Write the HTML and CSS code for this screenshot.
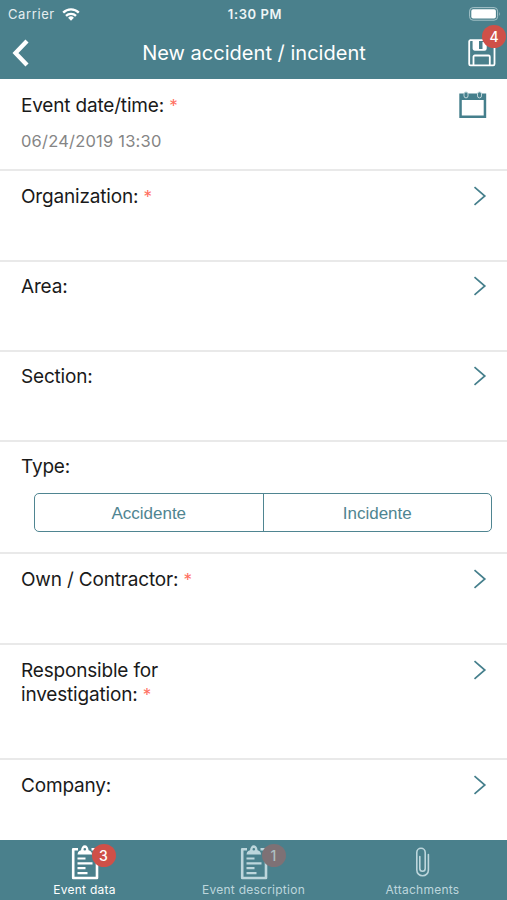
FILE: index.html
```html
<!DOCTYPE html>
<html lang="en">
<head>
<meta charset="utf-8">
<title>New accident / incident</title>
<link rel="stylesheet" href="styles.css">
</head>
<body>
<svg class="defs" width="0" height="0" aria-hidden="true">
  <symbol id="chevron" viewBox="0 0 14 20"><path d="M1.500 1.200 11.800 10 1.500 18.800" fill="none" stroke="currentColor" stroke-width="1.700"/></symbol>
  <symbol id="clipboard" viewBox="0 0 28 36">
    <path d="M7 4.300H2.200V33H26V4.300H20.500" fill="none" stroke="currentColor" stroke-width="2.600" stroke-linejoin="round"/>
    <path fill-rule="evenodd" fill="currentColor" d="M6.500 9.500C7 6.500 8 5.800 10 5.300C10.300 2.200 11.700.2 13.800.2S17.300 2.200 17.600 5.300C19.600 5.800 20.600 6.500 21.100 9.500ZM13.800 3A1.300 1.300 0 1 0 13.800 5.600A1.300 1.300 0 1 0 13.800 3"/>
    <path d="M6.500 13.500H14.500M6.500 18.300H21.500M6.500 23.200H14.500M6.500 28.200H16.500" stroke="currentColor" stroke-width="2.200"/>
  </symbol>
</svg>
<div class="app">
  <header class="header">
    <div class="status">
      <div class="carrier"><span>Carrier</span>
        <svg width="18" height="13" viewBox="0 0 18 13"><g fill="none" stroke="#fff" stroke-width="2.300"><path d="M1.200 4.600a11 11 0 0 1 15.600 0"/><path d="M4 7.900a7 7 0 0 1 10 0"/></g><path d="M9 12.700 6.100 9.700a4.200 4.200 0 0 1 5.800 0Z" fill="#fff"/></svg>
      </div>
      <div class="time">1:30 PM</div>
      <svg class="battery" width="33" height="14" viewBox="0 0 33 14"><rect x=".6" y=".6" width="28" height="12.600" rx="3.500" fill="none" stroke="#a6c3c9"/><rect x="2.300" y="2.300" width="24.600" height="9.200" rx="1.800" fill="#fff"/><path d="M30.300 4.800q1.600 2.100 0 4.200Z" fill="#a6c3c9"/></svg>
    </div>
    <div class="navbar">
      <svg class="back" width="17" height="28" viewBox="0 0 17 28"><path d="M15 2 3.500 14 15 26" fill="none" stroke="#fff" stroke-width="4.300"/></svg>
      <h1>New accident / incident</h1>
      <div class="save">
        <svg width="28" height="28" viewBox="0 0 28 28"><path d="M2 1.200H22L26.500 5.500V25A1.300 1.300 0 0 1 25.200 26.300H2.500A1.300 1.300 0 0 1 1.200 25V2.500A1.300 1.300 0 0 1 2.500 1.200M5.500 1.500V9.500A1.300 1.300 0 0 0 6.800 10.800H16.500A1.300 1.300 0 0 0 17.800 9.500V1.500M5.500 26V17.800A1.300 1.300 0 0 1 6.800 16.500H20.500A1.300 1.300 0 0 1 21.800 17.800V26" fill="none" stroke="#fff" stroke-width="1.800"/><path d="M5.500 1.500H11V10H5.500ZM14.500 3H17.500V10H14.500Z" fill="#fff"/></svg>
        <span class="badge">4</span>
      </div>
    </div>
  </header>
  <main class="form">
    <section class="row date">
      <div><div class="label">Event date/time: <i>*</i></div><div class="value">06/24/2019 13:30</div></div>
      <svg class="calendar" width="28" height="28" viewBox="0 0 28 28"><path fill="#457f8c" fill-rule="evenodd" d="M.3 2.500H27.200V27H.3ZM2.800 9V24.500H24.700V9Z"/><g fill="#457f8c" stroke="#c4d8dc"><rect x="5" y=".9" width="4" height="6" rx="2"/><rect x="18.500" y=".9" width="4" height="6" rx="2"/></g></svg>
    </section>
    <section class="row org"><div class="label">Organization: <i>*</i></div><svg class="chev"><use href="#chevron"/></svg></section>
    <section class="row area"><div class="label">Area:</div><svg class="chev"><use href="#chevron"/></svg></section>
    <section class="row area"><div class="label">Section:</div><svg class="chev"><use href="#chevron"/></svg></section>
    <section class="row type"><div class="label">Type:</div>
      <div class="segments"><button>Accidente</button><button>Incidente</button></div>
    </section>
    <section class="row own"><div class="label">Own / Contractor: <i>*</i></div><svg class="chev"><use href="#chevron"/></svg></section>
    <section class="row resp"><div class="label">Responsible for<br>investigation: <i>*</i></div><svg class="chev"><use href="#chevron"/></svg></section>
    <section class="row company"><div class="label">Company:</div><svg class="chev"><use href="#chevron"/></svg></section>
  </main>
  <nav class="tabs">
    <div class="tab active"><div class="icon"><svg width="28" height="36"><use href="#clipboard"/></svg><span class="badge">3</span></div><span class="name">Event data</span></div>
    <div class="tab"><div class="icon"><svg width="28" height="36"><use href="#clipboard"/></svg><span class="badge faint">1</span></div><span class="name">Event description</span></div>
    <div class="tab"><div class="icon"><svg width="28" height="36" viewBox="0 0 28 36"><path d="M10.800 11.500V23.500a2.700 2.700 0 0 0 5.400 0V7.500a4.200 4.200 0 0 0-8.400 0V25a5.800 5.800 0 0 0 11.600 0V9.500" fill="none" stroke="currentColor" stroke-width="1.600" stroke-linecap="round"/></svg></div><span class="name">Attachments</span></div>
  </nav>
</div>
</body>
</html>
```
FILE: styles.css
```css
* { box-sizing: border-box; }
body { margin: 0; font-family: Inter, "Liberation Sans", sans-serif; background: #fff; color: #1a1a1a; }
svg { display: block; flex: none; }
.defs { position: absolute; }
.app { width: 507px; height: 900px; display: flex; flex-direction: column; overflow: hidden; }
.header { height: 79px; flex: none; background: #4a808c; color: #fff; }
.status { height: 27px; display: grid; grid-template-columns: 1fr auto 1fr; align-items: center; padding: 1px 5px 0 8px; font-size: 13px; }
.carrier { display: flex; align-items: center; gap: 7px; color: #e5eef0; letter-spacing: .6px; }
.time { font-weight: 600; letter-spacing: .6px; color: #eef5f6; }
.battery { justify-self: end; }
.navbar { height: 51px; display: grid; grid-template-columns: 40px 1fr 40px; align-items: center; padding: 0 11px 0 12px; }
h1 { margin: 0; font-size: 20px; font-weight: 400; text-align: center; letter-spacing: .02px; padding-top: 1px; }
.save { position: relative; width: 28px; justify-self: end; }
.badge { position: absolute; left: 14px; top: -14px; width: 24px; height: 23px; border-radius: 50%; background: #cf5048; color: #fff; font-size: 14px; font-weight: 500; line-height: 23px; text-align: center; }
.form { flex: 1; min-height: 0; }
.row { display: flex; justify-content: space-between; align-items: flex-start; border-bottom: 2px solid #e9e9e9; padding: 13px 20px 0 21px; height: 90px; }
.label { font-size: 19px; line-height: 24px; letter-spacing: -.18px; }
.label i { font-style: normal; font-size: 17px; color: #ff6f61; }
.chev { width: 14px; height: 20px; margin-top: 1px; color: #457f8c; }
.date { height: 92px; padding-top: 15px; }
.value { font-size: 16.500px; line-height: 20px; margin-top: 13px; letter-spacing: .2px; color: #858585; }
.calendar { margin-top: -3px; }
.org { height: 91px; padding-top: 14px; }
.type { height: 112px; display: block; padding-right: 15px; }
.segments { display: flex; height: 39px; margin: 14px 0 0 13px; border: 1px solid #4f8591; border-radius: 5px; }
.segments button { flex: 1; border: 0; background: none; padding: 2px 0 0; font-family: "Liberation Sans", sans-serif; font-size: 17px; color: #4f8591; }
.segments button + button { border-left: 1px solid #4f8591; }
.own { height: 91px; padding-top: 14px; }
.resp { height: 115px; padding-top: 14px; }
.company { height: 80px; padding-top: 14px; border-bottom: 0; }
.tabs { display: grid; grid-template-columns: repeat(3, 1fr); height: 60px; flex: none; background: #4a808c; }
.tab { display: flex; flex-direction: column; align-items: center; color: #bdd6dc; padding-top: 5px; }
.active { color: #fff; }
.icon { position: relative; width: 28px; height: 36px; }
.name { font-size: 12px; line-height: 16px; letter-spacing: .25px; margin-top: 1px; }
.icon .badge { left: 21px; top: -1px; }
.icon .faint { left: 22px; background: #7e7175; color: #adbfc1; }
```
